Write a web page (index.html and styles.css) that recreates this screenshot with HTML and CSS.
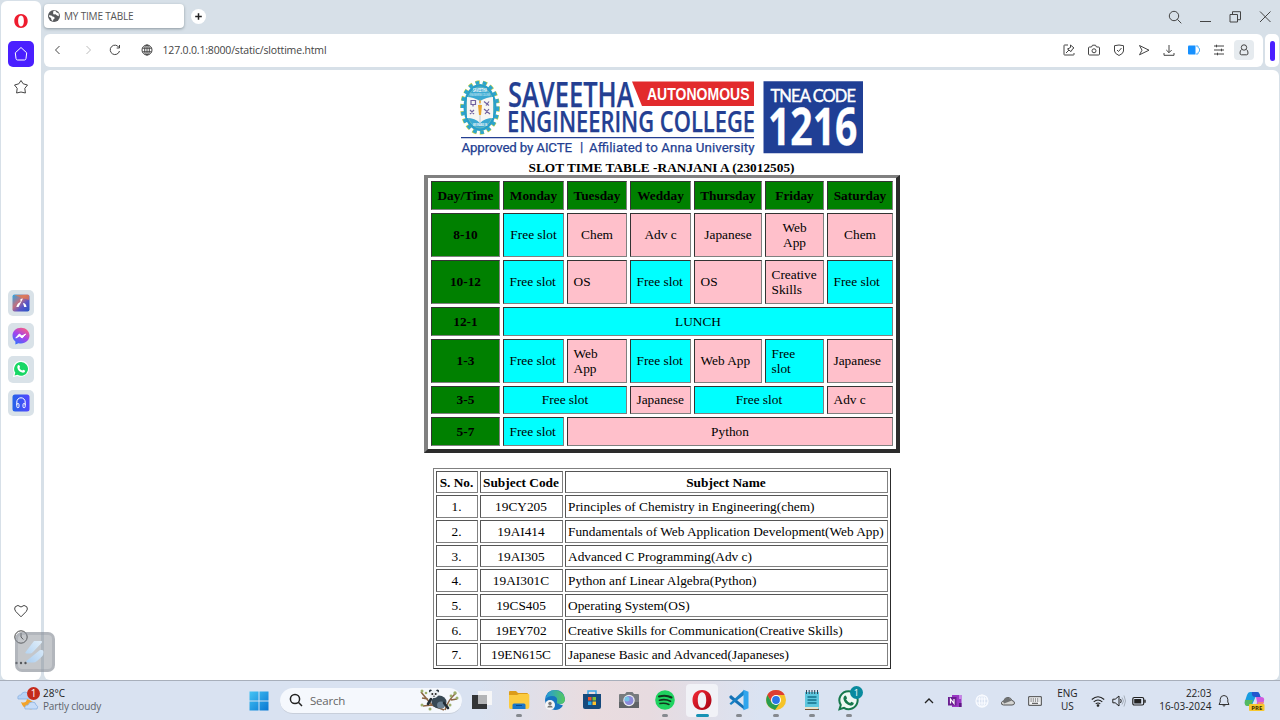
FILE: index.html
```html
<!DOCTYPE html>
<html lang="en">
<head>
<meta charset="utf-8">
<title>MY TIME TABLE</title>
<link rel="stylesheet" href="styles.css">
</head>
<body>
<div class="desktop">
  <div class="browser">
    <nav class="sidebar">
      <svg class="side-logo" width="16" height="16" viewBox="0 0 16 16"><path fill="#ee1c2e" fill-rule="evenodd" d="M8 1c4 0 6.700 3.100 6.700 7S12 15 8 15 1.300 11.900 1.300 8 4 1 8 1Zm0 1.600C6 2.600 5.100 5 5.100 8S6 13.400 8 13.400s2.900-2.400 2.900-5.400S10 2.600 8 2.600Z"/></svg>
      <span class="side-home"><svg width="16" height="16" viewBox="0 0 16 16" fill="none" stroke="#fff" stroke-width="1"><path d="M2.300 6.800 8 1.500l5.700 5.300-.7 5.700q-.2 1.500-1.500 1.500h-7Q3.200 14 3 12.500Z" stroke-linejoin="round"/></svg></span>
      <svg class="side-star" width="16" height="16" viewBox="0 0 16 16" fill="none" stroke="#444" stroke-width="1"><path stroke-linejoin="round" d="m8 1.500 2.200 3.300 4.300 1.200-2.700 3.400.6 4.600L8 13l-4.400 1 .6-4.600L1.500 6l4.300-1.200Z"/></svg>
      <div class="side-apps">
        <span class="side-app"><svg width="18" height="18" viewBox="0 0 18 18"><defs><linearGradient id="aria" x1="0" y1="0" x2="1" y2="1"><stop offset="0" stop-color="#25a8e8"/><stop offset=".4" stop-color="#c1707e"/><stop offset=".65" stop-color="#5a54c8"/><stop offset="1" stop-color="#2456c4"/></linearGradient></defs><rect x=".5" y=".5" width="17" height="17" rx="2" fill="url(#aria)"/><path d="M2 1h15v5L10 4Z" fill="#f17c45" opacity=".65"/><path d="M8.500 5 11 4.500 6.500 13H4.300q1-4 4.200-5Zm2.500 4q3 0 3.500 4h-2.300Z" fill="#fff"/></svg></span>
        <span class="side-app"><svg width="18" height="18" viewBox="0 0 18 18"><defs><linearGradient id="msg" x1=".2" y1="1" x2=".8" y2="0"><stop offset="0" stop-color="#2e72ff"/><stop offset=".5" stop-color="#a443ed"/><stop offset="1" stop-color="#ff5e7c"/></linearGradient></defs><path fill="url(#msg)" d="M9 .7c4.900 0 8.500 3.500 8.500 7.900S13.900 16.500 9 16.500q-1.300 0-2.500-.3L3.400 17.500v-3Q.5 12.400.5 8.600C.5 4.200 4.100.7 9 .7Z"/><path d="m3.800 11 3.500-4 2.600 2 3.800-2-3.500 4-2.600-2Z" fill="#fff" stroke="#fff"/></svg></span>
        <span class="side-app"><svg width="18" height="18" viewBox="0 0 18 18"><path fill="#fff" d="M9 .8a8 8 0 1 1-3.700 15.100L.8 17.200 2 12.700A8 8 0 0 1 9 .8Z"/><path fill="#18d765" d="M9 2a6.900 6.900 0 1 1-3.500 12.800l-3 .8.800-2.900A6.900 6.900 0 0 1 9 2Z"/><path fill="#fff" d="M6 5.200q1-.8 1.500.4l.6 1.400-.7 1q1.200 2 2.900 2.600l1-.9 2 1q-.3 2-2.300 2.100-5-1-5.700-5.300.1-1.700.7-2.300Z"/></svg></span>
        <span class="side-app"><svg width="18" height="18" viewBox="0 0 18 18"><defs><linearGradient id="play"><stop offset="0" stop-color="#2563e8"/><stop offset="1" stop-color="#5146ff"/></linearGradient></defs><rect x=".5" y=".5" width="17" height="17" rx="2.500" fill="url(#play)"/><g fill="none" stroke="#fff"><path d="M4.800 11V8a4.200 4.200 0 0 1 8.400 0v3"/><rect x="4.800" y="9.500" width="2.200" height="4.200" rx="1"/><rect x="11" y="9.500" width="2.200" height="4.200" rx="1"/></g></svg></span>
      </div>
      <div class="side-bottom">
        <svg width="16" height="16" viewBox="0 0 16 16" fill="none" stroke="#444"><path d="M8 13.800 2.700 8.400Q.8 6 2.200 3.800 4.800 1 8 4q3.200-3 5.800-.2 1.400 2.200-.5 4.600Z"/></svg>
        <svg width="16" height="16" viewBox="0 0 16 16" fill="none" stroke="#444"><circle cx="8" cy="8" r="6.200"/><path d="M8 3.800V8l2.300 2.500"/></svg>
        <svg width="16" height="16" viewBox="0 0 16 16" fill="#333"><circle cx="3.500" cy="8" r="1.200"/><circle cx="8" cy="8" r="1.200"/><circle cx="12.500" cy="8" r="1.200"/></svg>
      </div>
    </nav>
    <div class="window">
      <header class="tabstrip">
        <div class="tab"><svg width="14" height="14" viewBox="0 0 14 14"><circle cx="7" cy="7" r="6" fill="#57595c"/><path fill="#fff" d="M2 6.300q3 0 3.500 1.300l1.800.4.300 1.500-1.500 1.300v1.400L4.500 11 4 9 2 7.600Zm4.500-4.500h2L9 3l2.800 1.500v2.700L10 6.500 8.500 5.200 6.700 5.500 6 4.200Z"/></svg><span>MY TIME TABLE</span></div>
        <span class="newtab"><svg width="15" height="15" viewBox="0 0 15 15"><circle cx="7.500" cy="7.500" r="7.500" fill="#fff"/><path d="M7.500 4.200v6.600M4.200 7.500h6.600" stroke="#222" stroke-width="1.500"/></svg></span>
        <div class="winctl">
          <svg width="16" height="16" viewBox="0 0 16 16"><circle cx="7" cy="7" r="4.700"/><path d="m10.300 10.300 4 4"/></svg>
          <svg width="16" height="16" viewBox="0 0 16 16"><path d="M3 12.500h11"/></svg>
          <svg width="16" height="16" viewBox="0 0 16 16"><path d="M3 5.500h7.500V13H3ZM5.500 5V2.700h8v8h-2.700"/></svg>
          <svg width="16" height="16" viewBox="0 0 16 16"><path d="m3 2.500 10.500 10.500M13.500 2.500 3 13"/></svg>
        </div>
      </header>
      <div class="barrow">
        <div class="address">
          <div class="nav">
            <svg width="16" height="16" viewBox="0 0 16 16"><path d="M9.500 4 5.500 8l4 4"/></svg>
            <svg class="dim" width="16" height="16" viewBox="0 0 16 16"><path d="m7.500 4 4 4-4 4"/></svg>
            <svg width="16" height="16" viewBox="0 0 16 16"><path d="M12 5.500a4.700 4.700 0 1 0 .5 3.500M12.500 3v3H9.700"/></svg>
            <svg class="globe" width="16" height="16" viewBox="0 0 16 16"><circle cx="8" cy="8" r="5"/><ellipse cx="8" cy="8" rx="2.300" ry="5"/><path d="M3.500 6.200h9M3.500 9.800h9M8 3v10"/></svg>
          </div>
          <span class="url">127.0.0.1:8000/static/slottime.html</span>
          <div class="tools">
            <span><svg width="16" height="16" viewBox="0 0 16 16"><path d="M7 3H3.500Q3 3 3 3.500v9q0 .5.5.5h9q.5 0 .5-.5V11M5 11l3-3M9.500 3l3.500 3-1.200.6-1.800 3L6.500 7l3-1.500Z"/></svg></span>
            <span><svg width="16" height="16" viewBox="0 0 16 16"><path d="M3.500 5h2l1-1.800h3l1 1.800h2q1 0 1 1v6q0 1-1 1h-9q-1 0-1-1V6q0-1 1-1Z"/><circle cx="8" cy="8.800" r="2"/></svg></span>
            <span><svg width="16" height="16" viewBox="0 0 16 16"><path d="M3.500 3.700 8 3l4.500.7V9q0 2.500-4.500 4.500Q3.500 11.500 3.500 9ZM6 8l1.500 1.500L10.500 6"/></svg></span>
            <span><svg width="16" height="16" viewBox="0 0 16 16"><path stroke-linejoin="round" d="m3.500 3.500 9.500 4.700-9.500 4.600L6 8.200Z"/></svg></span>
            <span><svg width="16" height="16" viewBox="0 0 16 16"><path d="M8 3v7.500M5.300 8 8 10.700 10.700 8M3 11v2.300h10V11"/></svg></span>
            <span><svg width="16" height="16" viewBox="0 0 16 16"><path fill="#1690ff" stroke="none" d="M3 3.500h6.500v9H3q-1 0-1-1v-7q0-1 1-1Z"/><path stroke="#55aef8" d="M10 4h2v1.500l1.500 1v3l-1.500 1V12h-2"/></svg></span>
            <span><svg width="16" height="16" viewBox="0 0 16 16"><path d="M3 4h10M3 8h10M3 12h10M5.500 2.700v2.600M10.500 6.700v2.600M6.500 10.700v2.600"/></svg></span>
            <span class="profile"><svg width="16" height="16" viewBox="0 0 16 16"><circle cx="8" cy="5.500" r="2.700"/><path d="M5.500 7.500Q4 8.500 4 11q0 1.800 1.300 1.800h5.400Q12 12.800 12 11q0-2.500-1.500-3.500"/></svg></span>
          </div>
        </div>
        <div class="panel-toggle"><span></span></div>
      </div>
      <main class="page">
        <svg class="logo" width="404" height="76" viewBox="460 80 404 76">
          <g fill="none" stroke="#2aa5cf">
            <ellipse cx="480" cy="107.500" rx="17.700" ry="25" stroke="#c3cf4a" stroke-width="4.400" stroke-dasharray="4.200 3.200"/>
            <ellipse cx="480" cy="107.500" rx="17.700" ry="25" stroke-width="3.200" stroke-dasharray="3.600 3.800"/>
          </g>
          <ellipse cx="480" cy="107.500" rx="16.500" ry="23.500" fill="#279ecb"/>
          <ellipse cx="480" cy="107.500" rx="13.800" ry="20.500" fill="#3ba9d2" stroke="#8bc9b4" stroke-width=".6"/>
          <path d="M467 97q6 0 13 4 7-4 13-4v21q-8 0-13 5-5-5-13-5Z" fill="#f6f6f3"/>
          <path d="M480 101v21" stroke="#bcc9d5"/>
          <path d="M471 100.500h4.500v4H471Zm2 4v2m11-5 5 4m0-4-3 4M470 110l4 4m0-4-4 4m15 0 4-5m-5 0 6 5" fill="none" stroke="#7162a0" stroke-width="1.200"/>
          <path d="m480 99 1 3-1 2-1-2Zm-2 6h4l-1 10h-2Z" fill="#e9a52a"/>
          <text x="473" y="91.500" textLength="14" lengthAdjust="spacingAndGlyphs" font-family="Open Sans" font-weight="700" font-size="4.500" fill="#fff">SAVEETHA</text>
          <text x="470" y="95.500" textLength="20" lengthAdjust="spacingAndGlyphs" font-family="Open Sans" font-weight="600" font-size="3" fill="#d8edf7">ENGINEERING COLLEGE</text>
          <text x="473" y="125.500" textLength="14" lengthAdjust="spacingAndGlyphs" font-family="Open Sans" font-weight="700" font-size="3.500" fill="#fff">WE ENABLE IN</text>
          <path d="M632 81.500h122V106H642Z" fill="#e22a2c"/>
          <g fill="#243f92" stroke="#243f92" stroke-width=".25">
            <text x="508" y="107" textLength="125.500" lengthAdjust="spacingAndGlyphs" font-family="Open Sans" font-weight="600" font-size="34.500">SAVEETHA</text>
            <text x="507" y="132" textLength="248" lengthAdjust="spacingAndGlyphs" font-family="Open Sans" font-weight="600" font-size="28.500">ENGINEERING COLLEGE</text>
            <path d="M461 137.600h293" stroke-width="1.200"/>
            <g font-family="Roboto" font-size="13.300">
              <text x="461.500" y="151.700" textLength="110.500" lengthAdjust="spacing">Approved by AICTE</text>
              <text x="580" y="151">|</text>
              <text x="589" y="151.700" textLength="165.500" lengthAdjust="spacing">Affiliated to Anna University</text>
            </g>
          </g>
          <text x="647" y="100.300" textLength="102.500" lengthAdjust="spacingAndGlyphs" font-family="Liberation Sans" font-weight="700" font-size="17.300" fill="#fff">AUTONOMOUS</text>
          <path d="M763.500 81.200H863v72h-99.500Z" fill="#203f95"/>
          <text x="770.500" y="101.500" textLength="85.500" lengthAdjust="spacing" font-family="Lato" font-size="16.500" fill="#fff" stroke="#fff" stroke-width=".4">TNEA CODE</text>
          <text x="768" y="145" textLength="89.500" lengthAdjust="spacingAndGlyphs" font-family="Open Sans" font-weight="700" font-size="51.500" fill="#fff" stroke="#fff" stroke-width=".3">1216</text>
        </svg>
        <h1 class="title">SLOT TIME TABLE -RANJANI A (23012505)</h1>
        <table class="slots">
          <colgroup><col class="c-day"><col class="c-mon"><col class="c-tue"><col class="c-wed"><col class="c-thu"><col class="c-fri"><col class="c-sat"></colgroup>
          <tr class="short"><th>Day/Time</th><th>Monday</th><th>Tuesday</th><th>Wedday</th><th>Thursday</th><th>Friday</th><th>Saturday</th></tr>
          <tr class="tall"><th>8-10</th><td class="free mid">Free slot</td><td class="mid">Chem</td><td class="mid">Adv c</td><td class="mid">Japanese</td><td class="mid">Web<br>App</td><td class="mid">Chem</td></tr>
          <tr class="tall"><th>10-12</th><td class="free">Free slot</td><td>OS</td><td class="free">Free slot</td><td>OS</td><td>Creative<br>Skills</td><td class="free">Free slot</td></tr>
          <tr class="short"><th>12-1</th><td class="free mid" colspan="6">LUNCH</td></tr>
          <tr class="tall"><th>1-3</th><td class="free">Free slot</td><td>Web<br>App</td><td class="free">Free slot</td><td>Web App</td><td class="free">Free<br>slot</td><td>Japanese</td></tr>
          <tr class="low"><th>3-5</th><td class="free mid" colspan="2">Free slot</td><td>Japanese</td><td class="free mid" colspan="2">Free slot</td><td>Adv c</td></tr>
          <tr class="short"><th>5-7</th><td class="free">Free slot</td><td class="mid" colspan="5">Python</td></tr>
        </table>
        <table class="subjects">
          <colgroup><col class="c-no"><col class="c-code"><col class="c-name"></colgroup>
          <tr class="slim"><th>S. No.</th><th>Subject Code</th><th>Subject Name</th></tr>
          <tr><td>1.</td><td>19CY205</td><td>Principles of Chemistry in Engineering(chem)</td></tr>
          <tr><td>2.</td><td>19AI414</td><td>Fundamentals of Web Application Development(Web App)</td></tr>
          <tr class="slim"><td>3.</td><td>19AI305</td><td>Advanced C Programming(Adv c)</td></tr>
          <tr><td>4.</td><td>19AI301C</td><td>Python anf Linear Algebra(Python)</td></tr>
          <tr><td>5.</td><td>19CS405</td><td>Operating System(OS)</td></tr>
          <tr class="slim"><td>6.</td><td>19EY702</td><td>Creative Skills for Communication(Creative Skills)</td></tr>
          <tr><td>7.</td><td>19EN615C</td><td>Japanese Basic and Advanced(Japaneses)</td></tr>
        </table>
      </main>
    </div>
  </div>
  <div class="floater"><svg width="20" height="24" viewBox="0 0 20 24"><defs><linearGradient id="fl" x1="0" y1="1" x2="1" y2="0"><stop offset="0" stop-color="#a9cdf0"/><stop offset="1" stop-color="#e3eff9"/></linearGradient></defs><path fill="url(#fl)" d="M9 1h7q2 0 .5 2L8 12Q6.500 13.500 5 13.500H1.500q-2 0-.5-2Zm6 9h2q1.500 0 1.500 2 0 3-1.500 4.500L12 21q-1.500 1.500-4 1.500H2.500q-2 0-.5-2Z"/></svg></div>
  <footer class="taskbar">
    <div class="weather">
      <svg width="26" height="28" viewBox="0 0 26 28"><path d="M2 12q-1-4 3-4 1-3 4-3 4 0 4 4 3 1 1 3Z" fill="#b7d3f6" stroke="#83acdf" stroke-width=".7"/><path d="M5 15q5 2 6-3 7 2 8 7 0 4-6 3-6 0-8-7Z" fill="#f3a329"/><path d="M9 22q-1-4 3-4 1-3 4-3 4 0 4 3 3 1 1 4Z" fill="#c7dcf8" stroke="#83acdf" stroke-width=".7"/><circle cx="17.500" cy="6.500" r="6.500" fill="#c42b1c"/><text x="17.500" y="10.300" text-anchor="middle" font-family="Open Sans" font-size="10" fill="#fff">1</text></svg>
      <div class="weather-text"><span>28°C</span><span class="muted">Partly cloudy</span></div>
    </div>
    <svg class="start" width="20" height="20" viewBox="0 0 20 20"><defs><linearGradient id="win" x1="0" y1="0" x2="1" y2="1"><stop offset="0" stop-color="#45c4f4"/><stop offset="1" stop-color="#0876d2"/></linearGradient></defs><path fill="url(#win)" d="M.5.500h9v9h-9Zm10 0h9v9h-9Zm-10 10h9v9h-9Zm10 0h9v9h-9Z"/></svg>
    <div class="search">
      <svg width="14" height="14" viewBox="0 0 14 14" fill="none" stroke="#222" stroke-width="1.500"><circle cx="6" cy="6" r="4.600"/><path d="m9.300 9.300 3.700 3.700"/></svg>
      <span>Search</span>
      <svg class="panda" width="40" height="24" viewBox="0 0 40 24"><path d="M2 4q4 5 11 13m13 5q3-10 11-17M4 18l9-1 12 5M3 10l6 1m23 1 6-1" fill="none" stroke="#8c6545" stroke-width="1.600"/><g fill="#9dae6b"><circle cx="3" cy="3" r="1.500"/><circle cx="7" cy="5" r="1.300"/><circle cx="3" cy="17" r="1.500"/><circle cx="11" cy="21" r="1.500"/><circle cx="36" cy="5" r="1.700"/><circle cx="32" cy="8" r="1.400"/><circle cx="38" cy="10" r="1.500"/><circle cx="31" cy="17" r="1.500"/></g><ellipse cx="20" cy="14" rx="7.500" ry="6.500" fill="#384955"/><ellipse cx="22" cy="17" rx="4" ry="3.500" fill="#6a8092"/><circle cx="11.500" cy="3" r="1.600" fill="#273139"/><circle cx="18.500" cy="3" r="1.600" fill="#273139"/><ellipse cx="15" cy="6" rx="4.500" ry="4" fill="#e9eef2"/><circle cx="13.300" cy="6" r="1" fill="#222"/><circle cx="16.700" cy="6" r="1" fill="#222"/><circle cx="15" cy="8.200" r=".7" fill="#222"/><path d="m12 11-3 5m16-1 4 5" stroke="#222c34" stroke-width="2.600" stroke-linecap="round"/></svg>
    </div>
    <div class="apps">
      <span><svg width="22" height="22" viewBox="0 0 22 22"><path d="M7 2h14v14H7Z" fill="#f6f6f7"/><path d="M1 6h15v14H1Z" fill="#333537"/><path d="M7 6h9v9H7Z" fill="#b3b4b6"/></svg></span>
      <span class="on"><svg width="22" height="22" viewBox="0 0 22 22"><path d="M1 3q0-1 1-1h6l2 2h9q1 0 1 1v4H1Z" fill="#dc9c19"/><path d="M1 6h8l2-1h9.500q.8 0 .8 1v12q0 2-2 2H2.500Q1 20 1 18Z" fill="#fccb3f"/><path d="M4.500 20v-4q0-1.500 1.500-1.500h10q1.500 0 1.500 1.500v4Z" fill="#1976c9"/><path d="M8 16.500h6" stroke="#0a4b94"/></svg></span>
      <span><svg width="22" height="22" viewBox="0 0 22 22"><defs><linearGradient id="ed"><stop offset="0" stop-color="#2396df"/><stop offset="1" stop-color="#55ca5b"/></linearGradient></defs><path d="M1 11Q2 1 11 1t10 9q0 5-6 5l4 1.500Q16 21 11 21 1 20 1 11Z" fill="#1674c0"/><path d="M1.500 10Q3 1 11 1q9 1 10 9 0 5-5 5-4 0-3-2.500 1-5.500-5-5.500-4 0-6.500 3Z" fill="url(#ed)"/><circle cx="6" cy="16" r="5" fill="#f3f4f5"/><circle cx="6" cy="14.500" r="1.700" fill="#777"/><path d="M3.300 18.500q0-2 2.700-2t2.700 2Z" fill="#777"/></svg></span>
      <span><svg width="22" height="22" viewBox="0 0 22 22"><path d="M7 5V2h8v3" fill="none" stroke="#38a6e8" stroke-width="1.500"/><path d="M2 5h18v13q0 2-2 2H4q-2 0-2-2Z" fill="#164a7c"/><path d="M7 8h3.500v3.500H7Z" fill="#f1512c"/><path d="M11.500 8H15v3.500h-3.500Z" fill="#80be35"/><path d="M7 12.500h3.500V16H7Z" fill="#28a9ed"/><path d="M11.500 12.500H15V16h-3.500Z" fill="#ffc32c"/></svg></span>
      <span><svg width="22" height="22" viewBox="0 0 22 22"><path d="M2 5h5l1.500-2h6L16 5h4q1 0 1 1v12q0 1-1 1H2q-1 0-1-1V6q0-1 1-1Z" fill="#777b7e"/><path d="M1 13h20v6H1Z" fill="#606467"/><circle cx="11" cy="11.500" r="5.700" fill="#eceef2"/><circle cx="11" cy="11.500" r="4.500" fill="#8b8ad9"/><circle cx="9" cy="10" r="2.500" fill="#75c3e6"/></svg></span>
      <span class="on"><svg width="22" height="22" viewBox="0 0 22 22"><circle cx="11" cy="11" r="9.800" fill="#1fd25f"/><g fill="none" stroke="#12351e" stroke-linecap="round"><path d="M5 7.500q7-2 12.500 1" stroke-width="2"/><path d="M5.500 11.200q6-1.500 11 1" stroke-width="1.700"/><path d="M6 14.500q5-1 9 1" stroke-width="1.500"/></g></svg></span>
      <span class="on active"><svg width="22" height="22" viewBox="0 0 22 22"><defs><linearGradient id="op" x1="0" y1="0" x2="1" y2="1"><stop offset="0" stop-color="#f42c38"/><stop offset="1" stop-color="#a40012"/></linearGradient></defs><path fill="url(#op)" fill-rule="evenodd" d="M11 1c5.900 0 9.500 4.200 9.500 10S16.900 21 11 21 1.500 16.800 1.500 11 5.100 1 11 1Zm0 2.200c-3 0-4.200 3.800-4.200 7.800s1.200 7.800 4.200 7.800 4.200-3.800 4.200-7.800S14 3.200 11 3.200Z"/></svg></span>
      <span class="on"><svg width="22" height="22" viewBox="0 0 22 22"><path d="M1.500 7.500 3 6l13 11v3.500L1.500 9Z" fill="#1470b4"/><path d="M1.500 14.500 16 1v5L3 16Z" fill="#1680c5"/><path d="m15.500.800 5 2v16.400l-5 2Z" fill="#30a5ed"/></svg></span>
      <span class="on"><svg width="22" height="22" viewBox="0 0 22 22"><circle cx="11" cy="11" r="10" fill="#f5c329"/><path d="M2.300 6Q5 1 11 1t8.700 5H11l-4.500 7Z" fill="#de3d33"/><path d="M2.300 6Q-2 17 10 21l5-7H7Z" fill="#289d50"/><circle cx="11" cy="11" r="5" fill="#fff"/><circle cx="11" cy="11" r="3.900" fill="#2b76e8"/></svg></span>
      <span class="on"><svg width="22" height="22" viewBox="0 0 22 22"><path d="M4 3h14v17H4Z" fill="#5ec7df"/><path d="M4 18h14l-2 3H4Z" fill="#e7e2cc"/><path d="M4 20.500h14" stroke="#775235"/><path d="M5.500 1v4M8.200 1v4M11 1v4M13.700 1v4M16.500 1v4" stroke="#2b4557"/><path d="M6.500 8h9M6.500 11h9M6.500 14h9" stroke="#14728c" stroke-width="1.500"/></svg></span>
      <span class="on wa"><svg width="22" height="22" viewBox="0 0 22 22"><path fill="#eef9f3" stroke="#16794c" stroke-width="2" d="M10.500 2.200a9 9 0 1 1-4.500 16.700L1.500 20.300 2.800 16A9 9 0 0 1 10.500 2.200Z"/><path fill="#16794c" d="M6.200 7.200q1.200-1.400 2 0l.9 2-1 1.400q1.600 2.600 4 3.300l1.300-1.200 2.500 1.300q-.2 2.500-3 2.700-6.500-1.200-7.500-7 .1-1.700.8-2.500Z"/></svg><b>1</b></span>
    </div>
    <div class="tray">
      <svg width="14" height="16" viewBox="0 0 14 16" fill="none" stroke="#222" stroke-width="1.300"><path d="m3 10 4-4 4 4"/></svg>
      <svg width="14" height="16" viewBox="0 0 14 16"><path d="M4 2h9.500v12H4Z" fill="#9a37c4"/><path d="M11 2h2.500v4H11Z" fill="#c984e7"/><path d="M11 10h2.500v4H11Z" fill="#5c1a80"/><path d="M0 4h8.500v8.500H0Z" fill="#6b1e91"/><path d="M2.500 10.500V6l3.500 4.500V6" fill="none" stroke="#fff" stroke-width="1.200"/></svg>
      <svg width="14" height="16" viewBox="0 0 14 16" fill="none" stroke="#f9fbff" stroke-width="1.200"><circle cx="7" cy="8" r="6"/><ellipse cx="7" cy="8" rx="2.700" ry="6"/><path d="M1.500 6h11M1.500 10h11M7 2v12"/></svg>
      <svg width="14" height="16" viewBox="0 0 14 16"><path d="M2.500 12Q0 12 .5 9.500 1 8 3 8q.5-3.500 4-3.500 3 0 4 3 2.500.5 2.500 2.500T11 12Z" fill="#d5d5d3" stroke="#555"/><path d="M2 8.500Q4 3 8 5l3 2.500-8 3Z" fill="#707273"/></svg>
      <svg width="14" height="16" viewBox="0 0 14 16"><path d="M.7 3.700h12.600v8.600H.7Z" fill="#f4f5f7" stroke="#444"/><path d="M2.500 6h9M2.500 8h9" stroke="#444" stroke-dasharray="1.200 1"/><path d="M4 10.300h6" stroke="#444"/></svg>
    </div>
    <div class="lang"><span>ENG</span><span>US</span></div>
    <div class="status">
      <svg width="14" height="14" viewBox="0 0 14 14" fill="none" stroke="#222" stroke-width="1.100"><path d="M.8 5.500q6.200-5.500 12.400 0M2.700 7.800q4.300-3.700 8.600 0M4.700 9.900q2.300-1.700 4.600 0"/><circle cx="7" cy="11.500" r=".8" fill="#222"/></svg>
      <svg width="14" height="14" viewBox="0 0 14 14" fill="none" stroke="#222"><path d="M.8 5.200h2.400L7 2v10L3.200 8.800H.8Z"/><path d="M8.500 5q1.500 2 0 4"/><path d="M10 3.500q3 3.500 0 7m2-9q3 5.500 0 11" stroke="#a7afbb"/></svg>
      <svg width="14" height="14" viewBox="0 0 14 14"><rect x=".8" y="3.500" width="10.900" height="7.500" rx="1.500" fill="none" stroke="#222" stroke-width="1.200"/><path d="M2.200 5h7v4.500h-7Z" fill="#222"/><path d="M13 5.700v3" stroke="#222" stroke-width="1.400"/></svg>
    </div>
    <div class="clock"><span>22:03</span><span>16-03-2024</span></div>
    <svg class="bell" width="14" height="14" viewBox="0 0 14 14" fill="none" stroke="#333"><path d="M2 10.500h10L10.800 8V5.200Q10.500 1.500 7 1.500T3.200 5.200V8ZM5.500 11q1.500 2.500 3 0"/></svg>
    <svg class="copilot" width="22" height="22" viewBox="0 0 22 22"><path d="M6 2h7q2 0 2.500 2l1 3h-5L8 15H3q-3 0-2-4l2-6q1-3 3-3Z" fill="#199de1"/><path d="M8 2h5q2 0 2.500 2l1 3h-5Q7 7 8 2Z" fill="#2357ce"/><path d="M1 10h8l-2 6H3q-3 0-2-6Z" fill="#54ba61"/><path d="M12 7h5q4 0 3 4l-2 6q-1 3-4 3H9q3 0 3-3l1-5Z" fill="#d05be0"/><path d="M14 12h6l-2 5h-5Z" fill="#f1877d"/><rect x="5" y="14" width="15.500" height="7" rx="1" fill="#f7c82d"/><text x="12.800" y="19.700" text-anchor="middle" font-family="Open Sans" font-weight="700" font-size="6" fill="#3b3100">PRE</text></svg>
  </footer>
</div>
</body>
</html>
```
FILE: styles.css
```css
* { box-sizing: border-box; }
body { margin: 0; overflow: hidden; font-family: "Open Sans", "Noto Sans", sans-serif; color: #222; }
svg { display: block; flex: none; }
.desktop { position: relative; display: grid; grid-template-rows: 680px 40px; width: 1280px; height: 720px; }
.browser { display: grid; grid-template-columns: 40px 1fr; gap: 3px; padding: 1px 1px 0; background: #d7e0e8; min-height: 0; }

/* Sidebar */
.sidebar { display: flex; flex-direction: column; align-items: center; background: #fff; border-radius: 6px; padding-top: 12px; }
.side-home { display: grid; place-items: center; width: 26px; height: 26px; margin-top: 12px; border-radius: 5px; background: #4a1fff; }
.side-star { margin-top: 12px; }
.side-apps { display: grid; gap: 7px; margin-top: 194.500px; }
.side-app { display: grid; place-items: center; width: 26px; height: 26.400px; border-radius: 5px; background: #d9e2e8; }
.side-bottom { display: grid; gap: 10px; margin: auto 0 9.500px; }

/* Tabs and address bar */
.window { display: flex; flex-direction: column; min-width: 0; }
.tabstrip { display: flex; height: 33px; padding-top: 3px; }
.tab { display: flex; align-items: center; gap: 3px; width: 140px; height: 24px; padding-left: 3px; border-radius: 4px; background: #fff; box-shadow: 0 1px 3px #8d989f; font-size: 10px; color: #555; letter-spacing: -.18px; }
.newtab { margin: 4.500px 0 0 7px; }
.winctl { display: flex; gap: 14px; margin: 5px 6.500px 0 auto; fill: none; stroke: #444; }
.barrow { display: flex; gap: 2px; height: 33px; }
.address { display: flex; align-items: center; flex: 1; padding-bottom: 1px; background: #fff; border-radius: 6px; fill: none; stroke: #444; }
.nav { display: flex; gap: 12.500px; margin-left: 6px; }
.nav .dim { stroke: #bbb; }
.nav .globe { margin-left: 3px; }
.url { margin-left: 8px; font-size: 10.500px; color: #444; letter-spacing: -.17px; }
.tools { display: flex; margin: 0 9px 0 auto; }
.tools span { display: grid; place-items: center; width: 24.900px; height: 20px; }
.tools .profile { width: 20px; margin-left: 3px; border-radius: 4px; background: #e6ebef; }
.panel-toggle { display: grid; place-items: center; width: 14px; background: #fff; border-radius: 5px; }
.panel-toggle span { width: 5px; height: 20px; border-radius: 3px; background: #4a1fff; }

/* Web page */
.page { display: flex; flex-direction: column; align-items: center; flex: 1; margin-top: 3px; padding-top: 10px; background: #fff; border-radius: 6px; color: #000; font: 13.333px/15.500px "Liberation Serif", serif; }
.title { margin: 4px 0 0; font-size: 13.333px; line-height: 15px; }
table { table-layout: fixed; border-style: solid; border-color: #808080 #2c2c2c #2c2c2c #808080; }
th, td { border: 1px solid; border-color: #333 #808080 #808080 #333; white-space: nowrap; }
.slots { width: 476px; height: 278px; border-width: 3px 4px 4px; border-spacing: 3px; }
.slots th { padding: 0 0 0 1px; background: #008000; }
.slots td { padding: 0 0 0 6px; background: #ffc0cb; }
.slots td.free { background: #00ffff; }
.slots td.mid { padding: 0 0 0 1px; text-align: center; }
.short { height: 29px; }
.tall { height: 44px; }
.low { height: 28px; }
.c-day { width: 69px; }
.c-mon, .c-wed { width: 61px; }
.c-tue { width: 60px; }
.c-thu { width: 68px; }
.c-fri { width: 59px; }
.c-sat { width: 66px; }
.subjects { width: 458px; margin-top: 15px; border-width: 1px; border-spacing: 2px; }
.subjects tr { height: 23px; }
.subjects tr.slim { height: 22px; }
.subjects th, .subjects td { padding: 1px 0 0; border-color: #555 #808080 #808080 #555; text-align: center; }
.subjects td:last-child { padding-left: 2.500px; text-align: left; }
.c-no { width: 42px; }
.c-code { width: 83px; }
.c-name { width: 323px; }

.floater { position: absolute; left: 15px; top: 632px; display: grid; place-items: center; width: 40px; height: 40px; border: 3px solid rgba(145, 152, 160, .35); border-radius: 7px; background: rgba(125, 130, 140, .45); }

/* Taskbar */
.taskbar { display: flex; align-items: center; border-top: 1px solid #a8afbb; background: linear-gradient(90deg, #d9e2f1 0 480px, #e9dcdf 590px, #e7dbe0 650px, #dae3f2 760px); font-size: 10px; line-height: 13px; }
.weather { display: flex; gap: 1px; width: 233px; padding-left: 16px; }
.weather-text, .lang, .clock { display: grid; padding-bottom: 1px; }
.muted { color: #5d626b; }
.weather .muted { letter-spacing: -.15px; }
.start { margin-left: 15.500px; }
.search { display: flex; align-items: center; width: 182px; height: 26px; margin-left: 11.500px; padding: 0 3px 0 9px; border-radius: 13px; background: #f5f8fd; border-bottom: 1px solid #c8cfdb; font-size: 11.500px; color: #666; }
.search span { margin-left: 7px; letter-spacing: -.2px; }
.panda { margin-left: auto; }
.apps { display: flex; gap: 4.700px; margin-left: 4px; }
.apps > span { position: relative; display: grid; place-items: center; width: 32px; height: 33px; border-radius: 4px; }
.apps svg { margin-bottom: 1px; }
.apps .active { background: #f1f2f7; }
.apps .on::after { content: ""; position: absolute; bottom: 0; width: 6px; height: 3px; border-radius: 2px; background: #85898f; }
.apps .active::after { width: 13px; background: #1692b4; }
.wa b { position: absolute; right: 2px; top: 2px; width: 13px; height: 13px; border-radius: 50%; background: #098a9e; color: #fff; font-size: 9px; font-weight: 400; text-align: center; }
.tray { display: flex; gap: 12.500px; margin-left: 57px; }
.lang { width: 40px; margin-left: 5.500px; text-align: center; }
.status { display: flex; gap: 6.500px; margin-left: 4px; }
.clock { width: 66px; margin-left: -1px; text-align: right; }
.bell { margin-left: 6px; }
.copilot { margin-left: 12.500px; }
```
